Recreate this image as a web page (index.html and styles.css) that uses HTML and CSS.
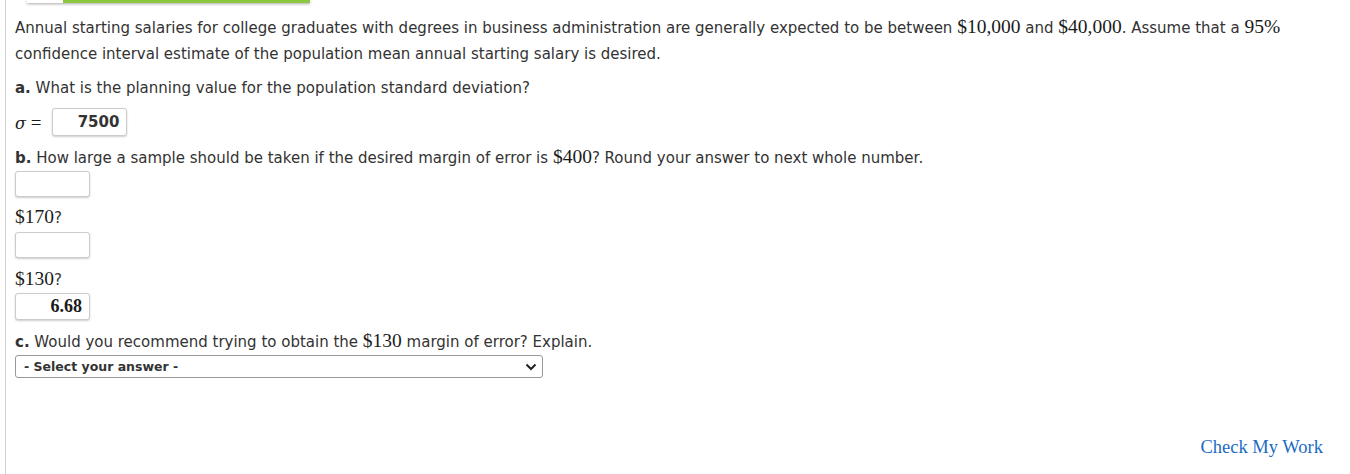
FILE: index.html
```html
<!DOCTYPE html>
<html>
<head>
<meta charset="utf-8">
<link rel="stylesheet" href="styles.css">
</head>
<body>
<div class="frame">
  <div class="topbar"><span class="tb-white"></span><span class="tb-green"></span></div>
  <div class="content">
    <p class="para">Annual starting salaries for college graduates with degrees in business administration are generally expected to be between <span class="m">$10,000</span> and <span class="m">$40,000</span>. Assume that a <span class="m">95%</span> confidence interval estimate of the population mean annual starting salary is desired.</p>
    <p class="q qa"><b>a.</b> What is the planning value for the population standard deviation?</p>
    <div class="row sigma-row"><span class="m sig"><i>σ</i> =</span><span class="box box-sigma">7500</span></div>
    <p class="q qb"><b>b.</b> How large a sample should be taken if the desired margin of error is <span class="m">$400</span>? Round your answer to next whole number.</p>
    <div class="row r1"><span class="box"></span></div>
    <p class="lbl l1"><span class="m">$170</span>?</p>
    <div class="row r2"><span class="box"></span></div>
    <p class="lbl l2"><span class="m">$130</span>?</p>
    <div class="row r3"><span class="box box-num">6.68</span></div>
    <p class="q qc"><b>c.</b> Would you recommend trying to obtain the <span class="m">$130</span> margin of error? Explain.</p>
    <div class="select"><span>- Select your answer -</span>
      <svg width="12" height="8" viewBox="0 0 12 8"><path d="M1.5 1.5 L6 6 L10.5 1.5" fill="none" stroke="#222" stroke-width="2"/></svg>
    </div>
    <div class="footer"><a class="check">Check My Work</a></div>
  </div>
</div>
</body>
</html>
```
FILE: styles.css
```css
html, body { margin: 0; padding: 0; background: #fff; }
body { font-family: "DejaVu Sans", Verdana, sans-serif; font-size: 15px; color: #333; }
.frame { margin-left: 5px; border-left: 1px solid #d0d0d0; height: 474px; }
.topbar { display: flex; margin-left: 21px; width: 283px; height: 3px; box-shadow: 0 1px 3px rgba(0,0,0,0.35); }
.tb-white { width: 36px; background: #fff; }
.tb-green { flex: 1; background: #8dc63f; }
.content { padding: 0 0 0 9px; }
p { margin: 0; }
.para { margin-top: 12px; line-height: 26px; }
.m { font-family: "Liberation Serif", "DejaVu Serif", serif; font-size: 19.5px; color: #1a1a1a; line-height: 1; }
.q { line-height: 20px; }
.qa { margin-top: 11px; }
.row { display: flex; align-items: center; }
.sigma-row { margin-top: 10px; gap: 11px; }
.sig { font-size: 19px; }
.sig i { font-family: "DejaVu Serif", serif; font-size: 16px; }
.box { display: inline-block; box-sizing: border-box; width: 75px; height: 26px; border: 1px solid #ccc; border-radius: 3px; box-shadow: 0 1px 2px rgba(0,0,0,0.2); background: #fff; text-align: right; padding-right: 7px; line-height: 24px; font-weight: bold; color: #333; }
.box-sigma { height: 28px; line-height: 26px; }
.box-num { height: 27px; line-height: 25px; font-family: "Liberation Serif", "DejaVu Serif", serif; font-size: 18px; color: #1a1a1a; }
.qb { margin-top: 11px; }
.r1 { margin-top: 3px; }
.lbl { line-height: 22px; }
.l1 { margin-top: 10px; }
.r2 { margin-top: 3px; }
.l2 { margin-top: 11px; }
.r3 { margin-top: 2px; }
.qc { margin-top: 11px; }
.select { margin-top: 3px; box-sizing: border-box; width: 528px; height: 23px; border: 1px solid #999; border-radius: 3px; display: flex; align-items: center; justify-content: space-between; padding: 0 5px 0 8px; font-weight: bold; font-size: 12.5px; color: #333; }
.footer { display: flex; justify-content: flex-end; margin-top: 58px; padding-right: 27px; line-height: 22px; }
.check { font-family: "Liberation Serif", "DejaVu Serif", serif; font-size: 18.5px; color: #1a6bc4; }
```
